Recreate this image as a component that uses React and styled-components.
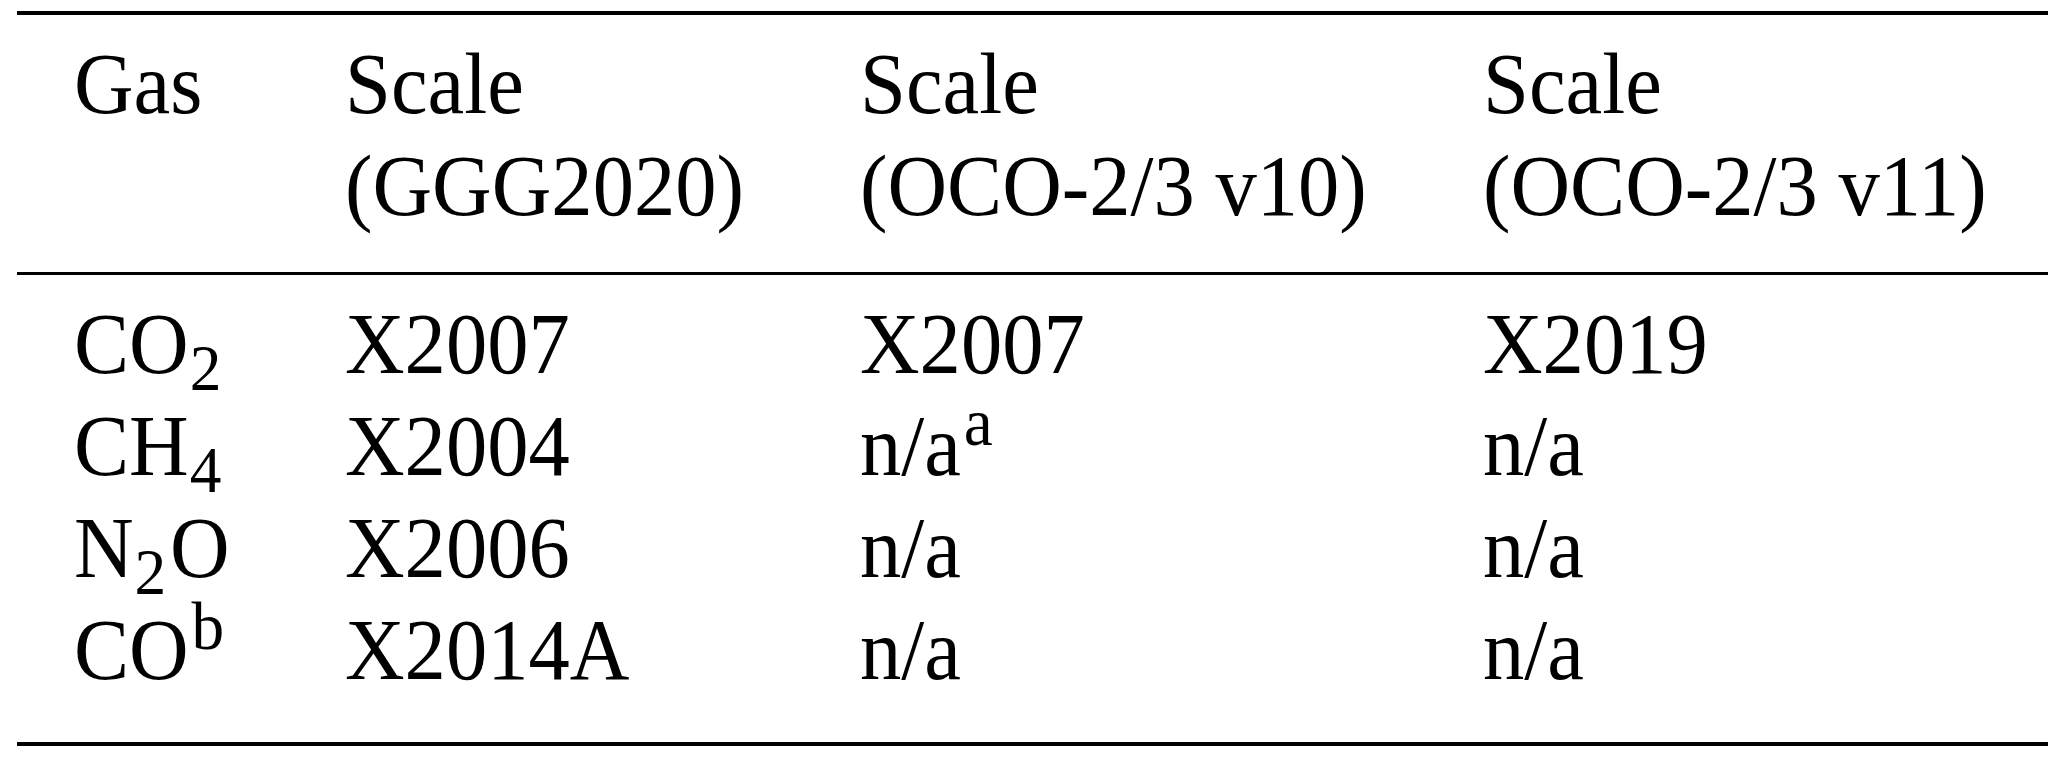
import React from 'react';
import styled, { createGlobalStyle } from 'styled-components';

const GlobalStyle = createGlobalStyle`
  html, body {
    margin: 0;
    padding: 0;
    background: #fff;
  }

  body {
    font-family: "Liberation Serif", "Times New Roman", serif;
    color: #000;
  }
`;

const Page = styled.div`
  padding: 11px 0 0 17px;
`;

const Table = styled.div`
  width: 2031px;
  border-top: 4px solid #000;
  border-bottom: 4px solid #000;
`;

const Head = styled.div`
  display: grid;
  grid-template-columns: 271px 515px 623px 1fr;
  padding: 18px 0 35px 57px;
  border-bottom: 3px solid #000;
`;

const Body = styled.div`
  padding: 18px 0 41px 57px;
`;

const Row = styled.div`
  display: grid;
  grid-template-columns: 271px 515px 623px 1fr;
`;

// the typeset table is slightly condensed horizontally
const Cell = styled.div`
  font-size: 86px;
  line-height: 102px;
  white-space: nowrap;
  transform: scaleX(0.96);
  transform-origin: left center;
`;

const Sub = styled.sub`
  display: inline-block;
  font-size: 66px;
  line-height: 0.75;
  vertical-align: -17px;
  margin: 0 4px 0 1px;
`;

const Sup = styled.sup`
  display: inline-block;
  font-size: 68px;
  line-height: 0.75;
  vertical-align: 30px;
  margin-left: 3px;
`;

const header = [
  ['Gas'],
  ['Scale', '(GGG2020)'],
  ['Scale', '(OCO-2/3 v10)'],
  ['Scale', '(OCO-2/3 v11)'],
];

const rows = [
  [<>CO<Sub>2</Sub></>, 'X2007', 'X2007', 'X2019'],
  [<>CH<Sub>4</Sub></>, 'X2004', <>n/a<Sup>a</Sup></>, 'n/a'],
  [<>N<Sub>2</Sub>O</>, 'X2006', 'n/a', 'n/a'],
  [<>CO<Sup>b</Sup></>, 'X2014A', 'n/a', 'n/a'],
];

const App = () => (
  <>
    <GlobalStyle />
    <Page>
      <Table>
        <Head>
          {header.map((lines, i) => (
            <Cell key={i}>
              {lines.map((line, j) => (
                <div key={j}>{line}</div>
              ))}
            </Cell>
          ))}
        </Head>
        <Body>
          {rows.map((row, i) => (
            <Row key={i}>
              {row.map((cell, j) => (
                <Cell key={j}>{cell}</Cell>
              ))}
            </Row>
          ))}
        </Body>
      </Table>
    </Page>
  </>
);

export default App;
